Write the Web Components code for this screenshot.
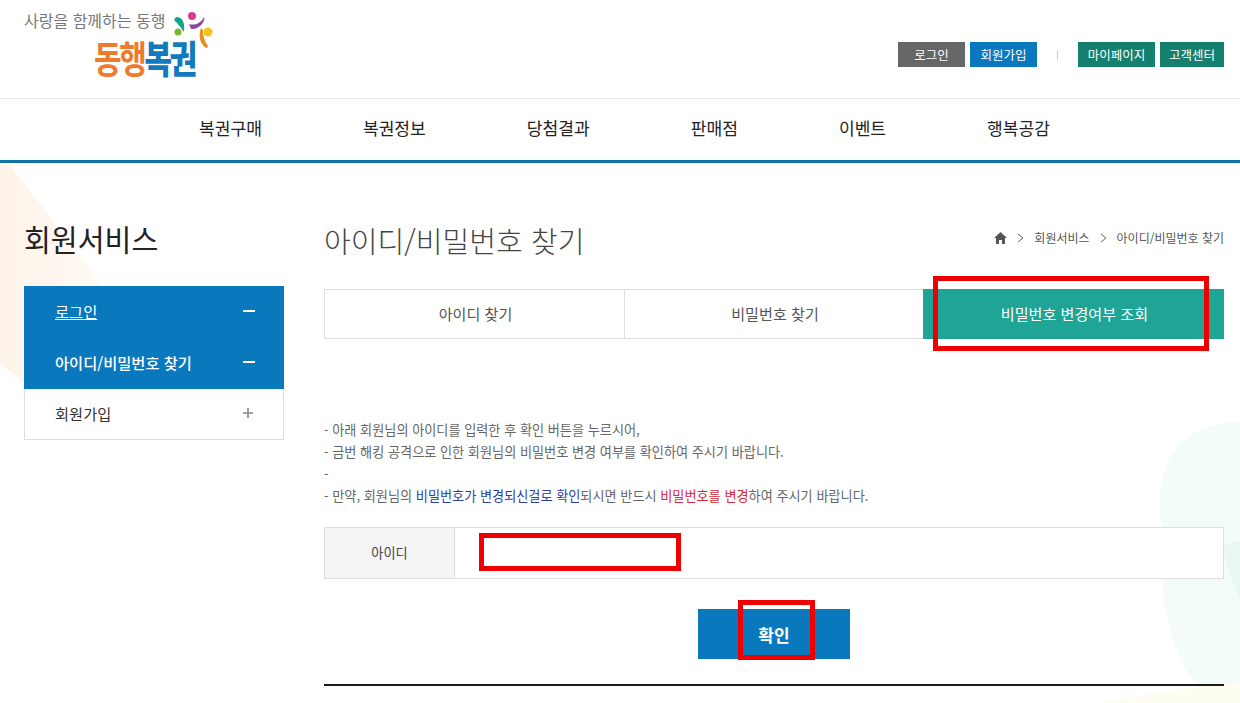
<!DOCTYPE html>
<html lang="ko">
<head>
<meta charset="utf-8">
<title>아이디/비밀번호 찾기</title>
<style>
    html, body { margin: 0; padding: 0; background: #fff; }
    body { font-family: "Noto Sans CJK KR", "Noto Sans", sans-serif; color: #333; height: 703px; overflow: hidden; }
</style>
</head>
<body>
<site-header></site-header>
<main-nav></main-nav>
<page-body>
    <side-menu slot="side"></side-menu>
    <find-panel slot="main"></find-panel>
</page-body>

<script>
const FONT = `"Noto Sans CJK KR", "Noto Sans", sans-serif`

class SiteHeader extends HTMLElement {
    connectedCallback() {
        const shadow = this.attachShadow({ mode: "open" })
        shadow.innerHTML = /* html */ `
            <style>
                :host {
                    display: flex;
                    justify-content: space-between;
                    height: 98px;
                    border-bottom: 1px solid #e9e9e9;
                    padding: 0 16px 0 24px;
                    font-family: ${FONT};
                }
                .logo { display: flex; flex-direction: column; width: 200px; position: relative; }
                .slogan { font-size: 16px; line-height: 20px; margin-top: 10px; color: #777; white-space: nowrap; }
                .name {
                    font-size: 30px;
                    line-height: 30px;
                    margin: 12px 0 0 70px;
                    font-weight: 700;
                    letter-spacing: -2.4px;
                    color: #ef7a2e;
                    white-space: nowrap;
                    transform: scaleY(1.25);
                }
                .name b { color: #1279bd; }
                .mark { position: absolute; left: 123px; top: 11px; }
                .links { display: flex; align-items: flex-start; padding-top: 42px; }
                .btn {
                    height: 25px;
                    line-height: 25px;
                    font-size: 12.5px;
                    color: #fff;
                    text-align: center;
                    margin-left: 5px;
                }
                .gray { background: #666; width: 67px; }
                .blue { background: #0a78bd; width: 67px; }
                .green { background: #16806f; }
                .g1 { width: 77px; }
                .g2 { width: 64px; }
                .sep { width: 1px; height: 10px; margin: 8px 15px 0 20px; background: #ccc; }
            </style>
            <div class="logo">
                <div class="slogan">사랑을 함께하는 동행</div>
                <div class="name">동행<b>복권</b></div>
                <svg class="mark" width="68" height="40" viewBox="0 0 68 40">
                    <circle cx="45" cy="5" r="4" fill="#d8408c"/>
                    <path d="M29 6 C36 6 38 12 37 21 C33 15 30 12 27 9 Z" fill="#17a38b"/>
                    <path d="M42 13 C48 15 54 12 57 6 C59 9 53 19 44 18 Z" fill="#8c4a9e"/>
                    <circle cx="31" cy="21" r="3.5" fill="#7ab833"/>
                    <circle cx="61" cy="21" r="4.5" fill="#f7c21c"/>
                    <path d="M54 17 C51 25 53 33 59 37 C60 37 61 36 61 35 C57 29 56 24 56 19 Z" fill="#e39024"/>
                </svg>
            </div>
            <div class="links">
                <div class="btn gray">로그인</div>
                <div class="btn blue">회원가입</div>
                <div class="sep"></div>
                <div class="btn green g1">마이페이지</div>
                <div class="btn green g2">고객센터</div>
            </div>
        `
    }
}

class MainNav extends HTMLElement {
    connectedCallback() {
        const shadow = this.attachShadow({ mode: "open" })
        shadow.innerHTML = /* html */ `
            <style>
                :host {
                    display: flex;
                    justify-content: center;
                    align-items: center;
                    gap: 101px;
                    height: 57px;
                    padding: 0 0 4px 9px;
                    border-bottom: 3px solid #0e74a6;
                    background: #fff;
                    font-family: ${FONT};
                    font-size: 17.1px;
                    font-weight: 400;
                    color: #222;
                }
            </style>
            ${["복권구매", "복권정보", "당첨결과", "판매점", "이벤트", "행복공감"].map(t => `<span>${t}</span>`).join("")}
        `
    }
}

class PageBody extends HTMLElement {
    connectedCallback() {
        const shadow = this.attachShadow({ mode: "open" })
        shadow.innerHTML = /* html */ `
            <style>
                :host {
                    display: flex;
                    gap: 40px;
                    padding: 0 16px 0 24px;
                    position: relative;
                    height: 540px;
                    overflow: hidden;
                }
                .bg { position: absolute; left: 0; top: 0; z-index: 0; }
                ::slotted(*) { z-index: 1; position: relative; }
            </style>
            <svg class="bg" width="1240" height="540" viewBox="0 0 1240 540">
                <defs>
                    <linearGradient id="peach" x1="0" y1="0" x2="1" y2="0">
                        <stop offset="0" stop-color="#fdf3e8"/>
                        <stop offset="1" stop-color="#fffaf5"/>
                    </linearGradient>
                </defs>
                <path d="M0 2 L10 2 L105 125 L24 220 L0 200 Z" fill="url(#peach)"/>
                <path d="M1240 258 C1195 262 1165 280 1160 330 C1158 360 1165 375 1170 385 C1158 410 1160 470 1195 520 L1240 540 Z" fill="#f3fcf9"/>
                <path d="M1222 382 C1226 400 1232 420 1240 435 L1240 378 Z" fill="#e9f6f1"/>
                <path d="M1190 525 C1150 530 1120 535 1100 540 L1240 540 L1240 520 Z" fill="#fefdf2"/>
            </svg>
            <slot name="side"></slot>
            <slot name="main"></slot>
        `
    }
}

class SideMenu extends HTMLElement {
    connectedCallback() {
        const shadow = this.attachShadow({ mode: "open" })
        shadow.innerHTML = /* html */ `
            <style>
                :host {
                    display: block;
                    width: 260px;
                    flex: none;
                    font-family: ${FONT};
                }
                h2 {
                    margin: 0;
                    padding-top: 56px;
                    height: 67px;
                    font-size: 29.2px;
                    line-height: 38px;
                    font-weight: 400;
                    color: #222;
                }
                .item {
                    display: flex;
                    justify-content: space-between;
                    align-items: center;
                    height: 49px;
                    padding: 0 29px 2px 31px;
                    font-size: 15.3px;
                }
                .on { background: #0a78bd; color: #fff; }
                .on + .on { height: 50px; }
                .on b { font-weight: 500; }
                u { text-underline-offset: 1px; }
                .off {
                    height: 48px;
                    background: #fff;
                    color: #333;
                    border: 1px solid #ddd;
                    border-top: 0;
                    padding: 0 29px 2px 30px;
                }
                svg { display: block; }
            </style>
            <h2>회원서비스</h2>
            <div class="item on"><u>로그인</u><svg width="12" height="12"><rect y="5" width="12" height="2" fill="#fff"/></svg></div>
            <div class="item on"><b>아이디/비밀번호 찾기</b><svg width="12" height="12"><rect y="5" width="12" height="2" fill="#fff"/></svg></div>
            <div class="item off">회원가입<svg width="12" height="12"><path d="M1 6H11M6 1V11" stroke="#888" stroke-width="1.6"/></svg></div>
        `
    }
}

class FindPanel extends HTMLElement {
    connectedCallback() {
        const shadow = this.attachShadow({ mode: "open" })
        shadow.innerHTML = /* html */ `
            <style>
                :host {
                    display: block;
                    width: 900px;
                    flex: none;
                    font-family: ${FONT};
                    color: #555;
                }
                .top {
                    display: flex;
                    justify-content: space-between;
                    align-items: center;
                    height: 126px;
                    padding-top: 0;
                }
                h1 { margin: 28px 0 0; font-size: 29.1px; font-weight: 300; line-height: 40px; color: #444; }
                .crumb { display: flex; align-items: center; gap: 10px; margin-top: 23px; font-size: 12px; color: #555; }
                .crumb svg { display: block; }
                .tabs { display: flex; height: 50px; margin-top: 0; font-size: 15.1px; }
                .tab {
                    display: flex;
                    align-items: center;
                    justify-content: center;
                    box-sizing: border-box;
                    padding: 0 0 2px 2px;
                    background: #fff;
                    border: solid #ddd;
                    border-width: 1px 0 1px 1px;
                    color: #555;
                }
                .t1 { width: 300px; }
                .t2 { width: 299px; }
                .t3 { width: 301px; }
                .tab.on { background: #1fa596; border: 0; color: #fff; }
                .note { margin: 80px 0 0; padding: 0; list-style: none; font-size: 13.15px; line-height: 22px; color: #666; }
                .note li { height: 22px; white-space: nowrap; }
                .blue { color: #2b3ea3; }
                .red { color: #d6293b; }
                .row {
                    display: flex;
                    height: 50px;
                    margin-top: 20px;
                    background: #fff;
                    border: 1px solid #ddd;
                    font-size: 13.2px;
                }
                .row .th {
                    width: 130px;
                    background: #f5f5f5;
                    border-right: 1px solid #ddd;
                    display: flex;
                    align-items: center;
                    justify-content: center;
                    padding-bottom: 2px;
                    box-sizing: border-box;
                    color: #444;
                }
                .actions { display: flex; justify-content: center; margin-top: 30px; }
                button {
                    width: 152px;
                    height: 50px;
                    border: 0;
                    background: #0a78bd;
                    color: #fff;
                    font-family: inherit;
                    font-size: 17px;
                    font-weight: 700;
                    padding: 0;
                }
                hr { border: 0; height: 2px; background: #1a1a1a; margin: 25px 0 0; }
                .mark { position: absolute; border: 5px solid #ee0000; box-sizing: border-box; }
            </style>
            <div class="top">
                <h1>아이디/비밀번호 찾기</h1>
                <div class="crumb">
                    <svg width="13" height="12" viewBox="0 0 13 12"><path d="M6.5 0 L13 6 H11 V12 H8 V8 H5 V12 H2 V6 H0 Z" fill="#555"/></svg>
                    <svg width="7" height="10" viewBox="0 0 7 10"><path d="M1 1 L6 5 L1 9" fill="none" stroke="#666"/></svg>
                    <span>회원서비스</span>
                    <svg width="7" height="10" viewBox="0 0 7 10"><path d="M1 1 L6 5 L1 9" fill="none" stroke="#666"/></svg>
                    <span>아이디/비밀번호 찾기</span>
                </div>
            </div>
            <div class="tabs">
                <div class="tab t1">아이디 찾기</div>
                <div class="tab t2">비밀번호 찾기</div>
                <div class="tab t3 on">비밀번호 변경여부 조회</div>
            </div>
            <ul class="note">
                <li>- 아래 회원님의 아이디를 입력한 후 확인 버튼을 누르시어,</li>
                <li>- 금번 해킹 공격으로 인한 회원님의 비밀번호 변경 여부를 확인하여 주시기 바랍니다.</li>
                <li>-</li>
                <li>- 만약, 회원님의 <span class="blue">비밀번호가 변경되신걸로 확인</span>되시면 반드시 <span class="red">비밀번호를 변경</span>하여 주시기 바랍니다.</li>
            </ul>
            <div class="row"><div class="th">아이디</div></div>
            <div class="actions"><button>확인</button></div>
            <hr>
            <div class="mark" style="left:609px;top:113px;width:276px;height:75px"></div>
            <div class="mark" style="left:155px;top:370px;width:202px;height:38px;background:#fff"></div>
            <div class="mark" style="left:414px;top:437px;width:77px;height:60px"></div>
        `
    }
}

customElements.define("site-header", SiteHeader)
customElements.define("main-nav", MainNav)
customElements.define("page-body", PageBody)
customElements.define("side-menu", SideMenu)
customElements.define("find-panel", FindPanel)
</script>
</body>
</html>
